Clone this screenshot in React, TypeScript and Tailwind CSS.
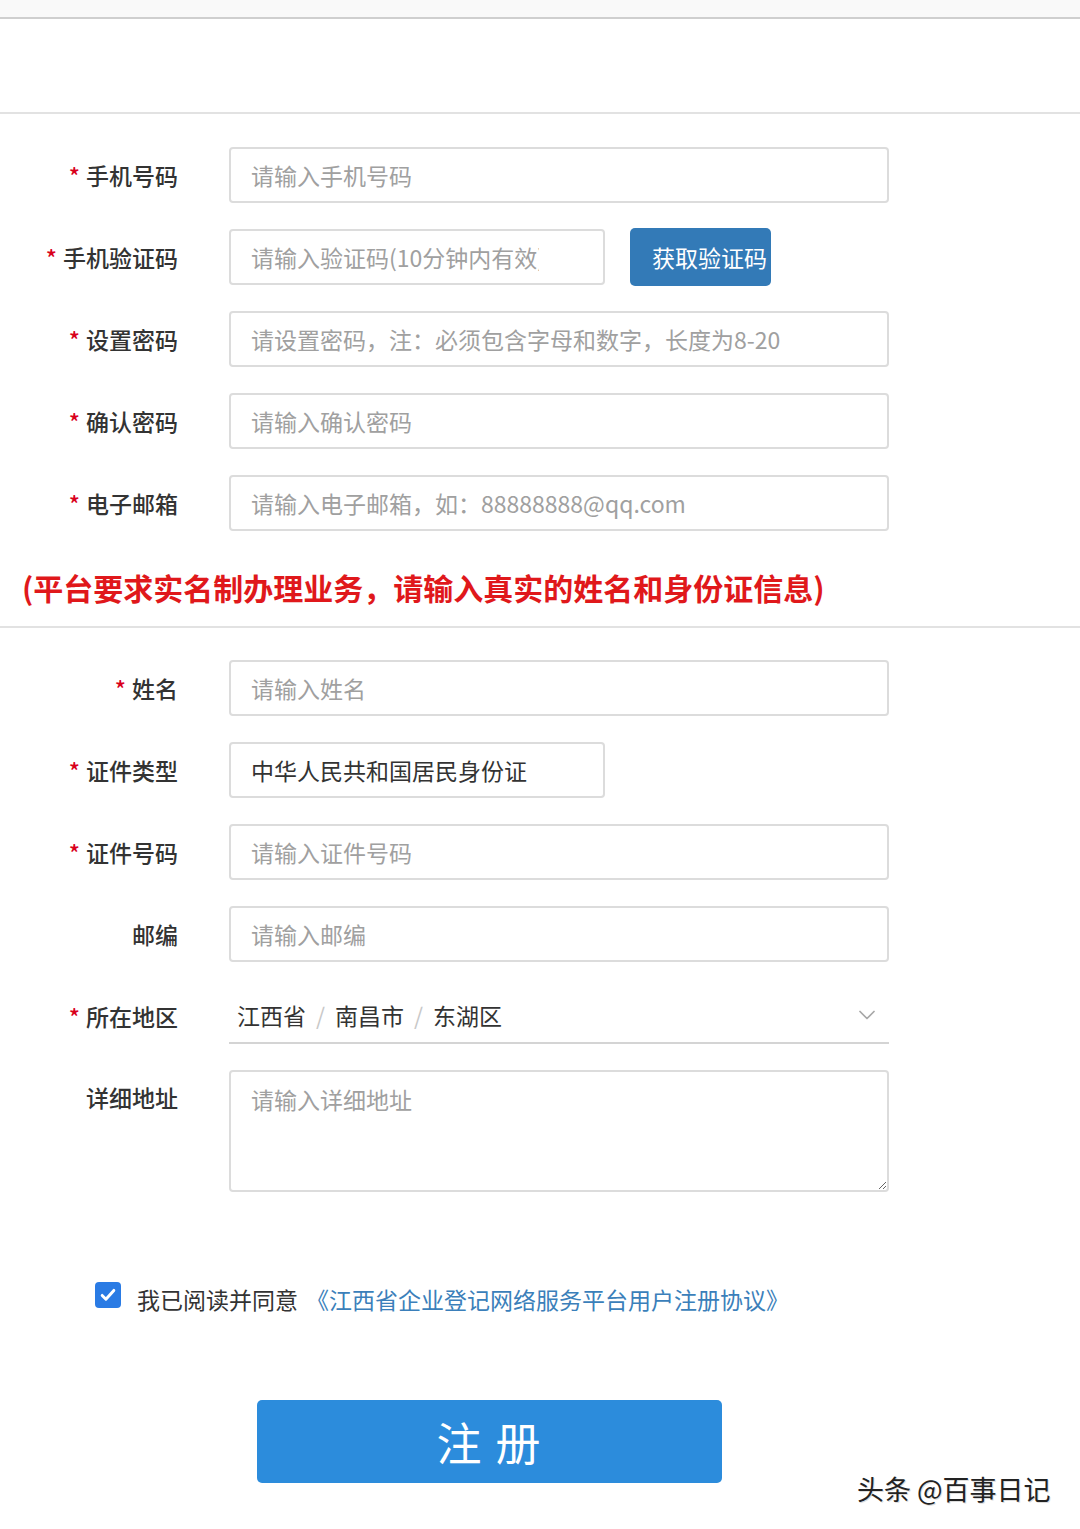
import { ChevronDown } from "lucide-react";

const font = { fontFamily: '"Noto Sans CJK SC", "Noto Sans", sans-serif' };

type FieldProps = {
  label: string;
  required?: boolean;
  children: React.ReactNode;
  top?: boolean;
};

const Field = ({ label, required, children, top }: FieldProps) => {
  return (
    <div className={`flex ${top ? "items-start" : "items-center"}`}>
      <div
        className={`w-[178px] shrink-0 text-right text-[23px] font-medium leading-[32px] text-[#333] ${top ? "pt-[11px]" : ""}`}
      >
        {required && <span className="mr-[6px] text-[#d9001b]">*</span>}
        {label}
      </div>
      <div className="ml-[51px]">{children}</div>
    </div>
  );
};

const Input = ({ placeholder, value, w = "w-[660px]", pr = "pr-[10px]" }: { placeholder?: string; value?: string; w?: string; pr?: string }) => {
  return (
    <input
      readOnly
      defaultValue={value}
      placeholder={placeholder}
      style={font}
      className={`${w} ${pr} h-[56px] rounded-[4px] border-2 border-[#dcdcdc] bg-white pl-[20px] text-[23px] text-[#333] outline-none placeholder:text-[#a0a0a0]`}
    />
  );
};

const App = () => {
  return (
    <div style={font} className="relative h-[1529px] w-[1080px] overflow-hidden bg-white">
      <div className="h-[19px] border-b-2 border-[#cfcfcf] bg-[#f9f9f9]" />
      <div className="h-[95px] border-b-2 border-[#e2e2e2]" />

      <div className="flex flex-col gap-[26px] pt-[33px]">
        <Field label="手机号码" required>
          <Input placeholder="请输入手机号码" />
        </Field>
        <Field label="手机验证码" required>
          <div className="flex h-[56px] items-center">
            <Input placeholder="请输入验证码(10分钟内有效)" w="w-[376px]" pr="pr-[64px]" />
            <button className="ml-[25px] h-[58px] w-[141px] shrink-0 whitespace-nowrap rounded-[5px] bg-[#337ab7] pl-[22px] text-left text-[23px] text-white">
              获取验证码
            </button>
          </div>
        </Field>
        <Field label="设置密码" required>
          <Input placeholder="请设置密码，注：必须包含字母和数字，长度为8-20" />
        </Field>
        <Field label="确认密码" required>
          <Input placeholder="请输入确认密码" />
        </Field>
        <Field label="电子邮箱" required>
          <Input placeholder="请输入电子邮箱，如：88888888@qq.com" />
        </Field>
      </div>

      <div className="mt-[36px] border-b-2 border-[#e2e2e2] pb-[19px] pl-[22px] text-[30px] font-bold leading-[40px] text-[#e0181b]">
        (平台要求实名制办理业务，请输入真实的姓名和身份证信息)
      </div>

      <div className="flex flex-col gap-[26px] pt-[32px]">
        <Field label="姓名" required>
          <Input placeholder="请输入姓名" />
        </Field>
        <Field label="证件类型" required>
          <Input value="中华人民共和国居民身份证" w="w-[376px]" />
        </Field>
        <Field label="证件号码" required>
          <Input placeholder="请输入证件号码" />
        </Field>
        <Field label="邮编">
          <Input placeholder="请输入邮编" />
        </Field>
        <Field label="所在地区" required>
          <div className="flex h-[56px] w-[660px] items-center border-b-2 border-[#d4d4d4] pl-[8px] pr-[8px] text-[23px] text-[#333]">
            <span>江西省</span>
            <span className="mx-[10px] text-[#c8c8c8]">/</span>
            <span>南昌市</span>
            <span className="mx-[10px] text-[#c8c8c8]">/</span>
            <span>东湖区</span>
            <ChevronDown className="ml-auto h-[28px] w-[28px] text-[#a8a8a8]" strokeWidth={1.5} />
          </div>
        </Field>
        <Field label="详细地址" top>
          <textarea
            readOnly
            placeholder="请输入详细地址"
            style={font}
            className="block h-[122px] w-[660px] rounded-[4px] border-2 border-[#dcdcdc] bg-white px-[20px] pt-[10px] text-[23px] text-[#333] outline-none placeholder:text-[#a0a0a0]"
          />
        </Field>
      </div>

      <div className="mt-[90px] flex items-start pl-[95px]">
        <div className="flex h-[26px] w-[26px] items-center justify-center rounded-[4px] bg-[#2a7be4]">
          <svg viewBox="0 0 24 24" className="h-[20px] w-[20px]" fill="none" stroke="white" strokeWidth={3.5} strokeLinecap="round" strokeLinejoin="round">
            <path d="M5 12.5l4.5 4.5L19 6.5" />
          </svg>
        </div>
        <div className="-mt-[1px] ml-[16px] text-[23px] leading-[36px] text-[#333]">
          我已阅读并同意
          <span className="ml-[8px] text-[#3b7fba]">《江西省企业登记网络服务平台用户注册协议》</span>
        </div>
      </div>

      <div className="mt-[83px] pl-[257px]">
        <button className="h-[83px] w-[465px] rounded-[5px] bg-[#2c8cdc] text-[45px] tracking-[2px] text-white">
          注 册
        </button>
      </div>

      <div className="absolute left-[857px] top-[1469px] text-[27px] leading-[40px] text-[#222] [text-shadow:1px_1px_0_#ddd]">
        头条 @百事日记
      </div>
    </div>
  );
};

export default App;
